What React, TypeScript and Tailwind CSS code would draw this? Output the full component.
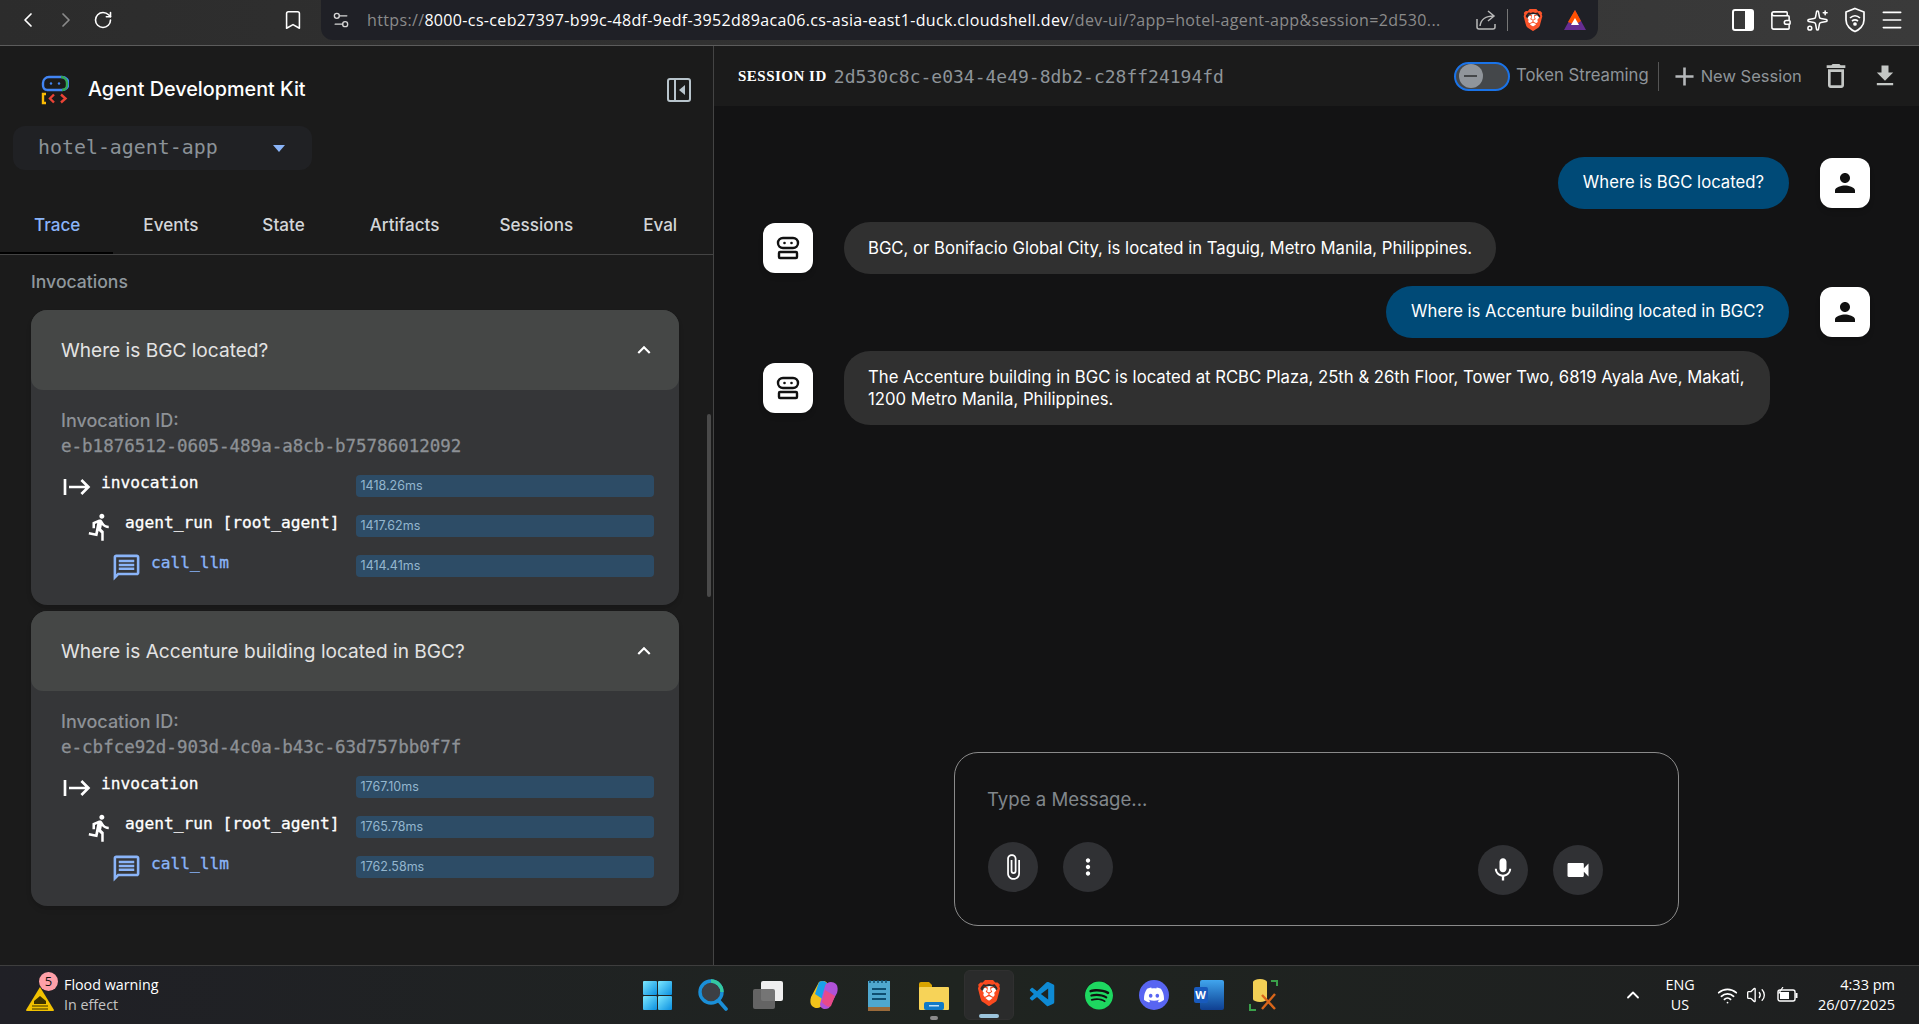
import React from "react";
import {
  Bookmark,
  ChevronLeft,
  ChevronRight,
  ChevronUp,
  Menu,
  RotateCw,
  Settings2,
  Sparkles,
  Volume2,
  Wallet,
  Wifi,
} from "lucide-react";
import {
  MdAdd,
  MdAttachFile,
  MdDeleteOutline,
  MdDirectionsRun,
  MdFileDownload,
  MdKeyboardArrowUp,
  MdMic,
  MdMoreVert,
  MdOutlineMessage,
  MdPerson,
  MdStart,
  MdVideocam,
} from "react-icons/md";
import { SiBrave, SiDiscord, SiSpotify } from "react-icons/si";
import { VscVscode } from "react-icons/vsc";

const mono = "font-['DejaVu_Sans_Mono',monospace]";

const invocations = [
  {
    title: "Where is BGC located?",
    id: "e-b1876512-0605-489a-a8cb-b75786012092",
    times: ["1418.26ms", "1417.62ms", "1414.41ms"],
  },
  {
    title: "Where is Accenture building located in BGC?",
    id: "e-cbfce92d-903d-4c0a-b43c-63d757bb0f7f",
    times: ["1767.10ms", "1765.78ms", "1762.58ms"],
  },
];

function AdkLogo() {
  return (
    <svg width="28" height="30" viewBox="0 0 28 30" fill="none">
      <path d="M6 15 H21 A5.5 5.5 0 0 0 21 2 H8 A6 6 0 0 0 2 8 V10 A5 5 0 0 0 6 15" stroke="#4285f4" strokeWidth="2.4" />
      <path d="M20 2 A6 6 0 0 1 26 8 V10 A5 5 0 0 1 21 15" stroke="#34a853" strokeWidth="2.4" />
      <circle cx="10" cy="8.5" r="1.2" fill="#4285f4" />
      <circle cx="18" cy="8.5" r="1.2" fill="#4285f4" />
      <path d="M5 19 H2 V28 H5" stroke="#fbbc04" strokeWidth="2.4" />
      <path d="M13 19.5 L9 23.5 L13 27.5" stroke="#ea4335" strokeWidth="2.4" />
      <path d="M20 19.5 L24.5 23.5 L20 27.5" stroke="#ea4335" strokeWidth="2.4" />
    </svg>
  );
}

function BotIcon() {
  return (
    <svg width="26" height="26" viewBox="0 0 26 26" fill="none" stroke="#111" strokeWidth="2.4">
      <rect x="3" y="3" width="20" height="10" rx="5" />
      <rect x="4" y="17" width="18" height="6" rx="1" />
      <circle cx="9.5" cy="8" r="1.3" fill="#111" stroke="none" />
      <circle cx="16.5" cy="8" r="1.3" fill="#111" stroke="none" />
    </svg>
  );
}

function BrowserBar() {
  return (
    <header className="flex h-[46px] shrink-0 items-start border-b border-[#5c5c5c] bg-gradient-to-r from-[#2c2c2c] to-[#3a3a3a] text-white">
      <div className="flex h-[40px] w-[321px] items-center pl-[16px]">
        <ChevronLeft size={24} strokeWidth={1.7} />
        <ChevronRight size={24} strokeWidth={1.7} className="ml-[14px] text-[#8a8a8a]" />
        <RotateCw size={20} strokeWidth={1.9} className="ml-[15px]" />
        <Bookmark size={22} strokeWidth={1.7} className="ml-[169px]" />
      </div>
      <div className="flex h-[40px] w-[1277px] items-center rounded-b-[12px] bg-[#1f2026] pl-[10px]">
        <Settings2 size={20} strokeWidth={1.6} className="text-[#d6d6d6]" />
        <div className="ml-[16px] w-[1088px] whitespace-nowrap font-['Open_Sans',sans-serif] text-[16px] tracking-[0.35px] text-[#8b8b8b]">
          https://
          <span className="text-white">8000-cs-ceb27397-b99c-48df-9edf-3952d89aca06.cs-asia-east1-duck.cloudshell.dev</span>
          /dev-ui/?app=hotel-agent-app&amp;session=2d530...
        </div>
        <svg width="22" height="22" viewBox="0 0 22 22" fill="none" stroke="#b9b9b9" strokeWidth="1.5" className="ml-[20px]">
          <path d="M13 2 L19 7 L13 12 M19 7 C10 7 6 10 5 17" />
          <path d="M2 10 V18 A2 2 0 0 0 4 20 H18 A2 2 0 0 0 20 18 V15" />
        </svg>
        <div className="ml-[10px] h-[22px] w-px bg-[#777]" />
        <span className="relative ml-[14px] flex h-[24px] w-[22px] items-center justify-center">
          <span className="absolute h-[13px] w-[13px] rounded-full bg-white" />
          <SiBrave size={24} className="relative text-[#fb542b]" />
        </span>
        <svg width="24" height="22" viewBox="0 0 24 22" className="ml-[19px]">
          <path d="M12 1 L23 21 H1 Z" fill="#662d91" />
          <path d="M12 1 L18 12 L12 16 L5 13 Z" fill="#ff5000" />
          <path d="M12 9 L16 16 H8 Z" fill="#fff" />
        </svg>
      </div>
      <div className="flex h-[40px] flex-1 items-center pl-[134px]">
        <svg width="22" height="22" viewBox="0 0 22 22" className="shrink-0">
          <rect x="1" y="1" width="20" height="20" rx="2" fill="none" stroke="#fff" strokeWidth="2" />
          <rect x="13" y="1" width="8" height="20" fill="#fff" />
        </svg>
        <Wallet size={23} strokeWidth={1.6} className="ml-[15px] shrink-0" />
        <Sparkles size={23} strokeWidth={1.6} className="ml-[14px] shrink-0" />
        <svg width="22" height="26" viewBox="0 0 22 26" fill="none" stroke="#fff" strokeWidth="1.7" className="ml-[15px] shrink-0">
          <path d="M11 1.5 L20 5 V13 C20 19 15 23 11 24.5 C7 23 2 19 2 13 V5 Z" />
          <path d="M6 11 C9 8 13 8 16 11 M8 14 C10 12.5 12 12.5 14 14" />
          <circle cx="11" cy="17" r="1" fill="#fff" />
        </svg>
        <Menu size={26} strokeWidth={1.5} className="ml-[13px] shrink-0" />
      </div>
    </header>
  );
}

function TraceRow({ indent, icon, label, time, blue }: { indent: string; icon: React.ReactNode; label: string; time: string; blue?: boolean }) {
  return (
    <div className="flex h-[40px]">
      <div className={`flex w-[295px] items-start ${indent} ${blue ? "text-[#8ab4f8]" : "text-white"}`}>
        <span className="flex h-[24px] w-[40px] shrink-0 items-center">{icon}</span>
        <span className={`${mono} -mt-[4px] whitespace-nowrap text-[16.2px] leading-[24px] [-webkit-text-stroke:0.3px]`}>{label}</span>
      </div>
      <div className="flex h-[22px] w-[299px] items-center rounded-[4px] bg-[#2d4c66] pl-[5px] text-[12.5px] text-[#94b6ce]">
        {time}
      </div>
    </div>
  );
}

function InvocationCard({ title, id, times }: { title: string; id: string; times: string[] }) {
  return (
    <section className="overflow-hidden rounded-[16px] bg-[#353638] shadow-md">
      <div className="flex h-[80px] items-center justify-between rounded-b-[12px] bg-[#454746] pl-[30px] pr-[22px]">
        <span className="text-[19.1px] text-[#e3e3e3]">{title}</span>
        <MdKeyboardArrowUp size={26} className="text-white" />
      </div>
      <div className="pb-[10px] pl-[30px] pr-[25px] pt-[19px]">
        <p className="text-[18px] font-medium leading-[24px] text-[#8d9196]">Invocation ID:</p>
        <p className={`${mono} text-[17.5px] leading-[26px] text-[#8d9196] [-webkit-text-stroke:0.3px]`}>{id}</p>
        <div className="mt-[16px]">
          <TraceRow indent="" icon={<MdStart size={32} />} label="invocation" time={times[0]} />
          <TraceRow indent="pl-[24px]" icon={<MdDirectionsRun size={30} />} label="agent_run [root_agent]" time={times[1]} />
          <TraceRow indent="pl-[50px]" blue icon={<MdOutlineMessage size={31} />} label="call_llm" time={times[2]} />
        </div>
      </div>
    </section>
  );
}

function Sidebar() {
  const tabs = [
    { name: "Trace", cls: "px-[32px] text-[#8ab4f8]" },
    { name: "Events", cls: "pl-[31px] pr-[32px] text-[#d3d6d9]" },
    { name: "State", cls: "pl-[32px] pr-[32px] text-[#d3d6d9]" },
    { name: "Artifacts", cls: "pl-[33px] pr-[30px] text-[#d3d6d9]" },
    { name: "Sessions", cls: "pl-[30px] pr-[36px] text-[#d3d6d9]" },
    { name: "Eval", cls: "pl-[34px] text-[#d3d6d9]" },
  ];
  return (
    <aside className="relative flex w-[714px] shrink-0 flex-col border-r border-[#444] bg-[#1b1b1b]">
      <div className="flex h-[80px] items-center pl-[41px] pr-[22px] pt-[8px]">
        <AdkLogo />
        <span className="ml-[19px] text-[19.8px] font-medium text-white">Agent Development Kit</span>
        <svg width="24" height="24" viewBox="0 0 24 24" fill="none" className="ml-auto">
          <rect x="1" y="1" width="22" height="22" rx="2" stroke="#b8c4cc" strokeWidth="2" />
          <path d="M8 1 V23" stroke="#b8c4cc" strokeWidth="2" />
          <path d="M18 7 L12 12 L18 17 Z" fill="#b8c4cc" />
        </svg>
      </div>
      <div className={`ml-[13px] flex h-[44px] w-[299px] items-center rounded-[12px] bg-[#202124] pl-[25px] ${mono} text-[19.9px] text-[#8b9298]`}>
        hotel-agent-app
        <span className="ml-[55px] h-0 w-0 border-x-[6px] border-t-[7px] border-x-transparent border-t-[#8ab4f8]" />
      </div>
      <nav className="relative mt-[29px] flex h-[56px] items-center border-b border-[#444] pb-[4px] pl-[2px]">
        {tabs.map((t) => (
          <span key={t.name} className={`text-[17.1px] font-medium ${t.cls}`}>
            {t.name}
          </span>
        ))}
        <span className="absolute bottom-0 left-0 h-[2px] w-[113px] bg-black" />
      </nav>
      <div className="pl-[31px] pr-[34px] pt-[15px]">
        <h3 className="text-[17.6px] font-medium leading-[24px] text-[#8f979d]">Invocations</h3>
        <div className="mt-[16px] flex flex-col gap-[6px]">
          {invocations.map((inv) => (
            <InvocationCard key={inv.id} {...inv} />
          ))}
        </div>
      </div>
      <div className="absolute right-[2px] top-[368px] h-[183px] w-[4px] rounded-full bg-[#4a4a4a]" />
    </aside>
  );
}

function Avatar({ kind }: { kind: "user" | "bot" }) {
  return (
    <div className="flex h-[50px] w-[50px] shrink-0 items-center justify-center rounded-[12px] bg-white shadow-md">
      {kind === "user" ? <MdPerson size={30} className="text-[#111]" /> : <BotIcon />}
    </div>
  );
}

function UserMsg({ text }: { text: string }) {
  return (
    <div className="flex items-center justify-end gap-[31px]">
      <div className="flex h-[52px] items-center rounded-[26px] bg-[#004a77] px-[25px] text-[16.7px] text-white">{text}</div>
      <Avatar kind="user" />
    </div>
  );
}

function BotMsg({ children, w }: { children: React.ReactNode; w: string }) {
  return (
    <div className="flex items-center gap-[31px]">
      <Avatar kind="bot" />
      <div className={`rounded-[26px] bg-[#303030] px-[24px] py-[15px] text-[16.7px] leading-[22px] text-white ${w}`}>{children}</div>
    </div>
  );
}

function RoundBtn({ children }: { children: React.ReactNode }) {
  return <button className="flex h-[50px] w-[50px] items-center justify-center rounded-full bg-[#303134] text-white">{children}</button>;
}

function Chat() {
  return (
    <main className="flex min-w-0 flex-1 flex-col bg-[#131314]">
      <div className="flex h-[60px] shrink-0 items-center bg-[#1b1b1b] pl-[24px] text-[#8e9499]">
        <span className="font-['Liberation_Serif',serif] text-[15px] font-bold tracking-[0.5px] text-white">SESSION ID</span>
        <span className={`${mono} ml-[7px] text-[18px]`}>2d530c8c-e034-4e49-8db2-c28ff24194fd</span>
        <div className="ml-[230px] flex h-[29px] w-[56px] items-center rounded-full border-2 border-[#1a73e8] bg-[#44474a] pl-[3px]">
          <span className="flex h-[24px] w-[24px] items-center justify-center rounded-full bg-[#90959b]">
            <span className="h-[2px] w-[13px] bg-[#44474a]" />
          </span>
        </div>
        <span className="ml-[6px] text-[16.7px]">Token Streaming</span>
        <span className="ml-[9px] h-[29px] w-px bg-[#555]" />
        <MdAdd size={31} className="ml-[10px] text-[#b5b8ba]" />
        <span className="ml-[1px] text-[16.5px]">New Session</span>
        <MdDeleteOutline size={32} className="ml-[18px] text-[#c4c7c5]" />
        <MdFileDownload size={28} className="ml-[19px] text-[#c4c7c5]" />
      </div>
      <div className="flex flex-col pl-[49px] pr-[49px] pt-[51px]">
        <UserMsg text="Where is BGC located?" />
        <div className="mt-[13px]">
          <BotMsg w="">BGC, or Bonifacio Global City, is located in Taguig, Metro Manila, Philippines.</BotMsg>
        </div>
        <div className="mt-[12px]">
          <UserMsg text="Where is Accenture building located in BGC?" />
        </div>
        <div className="mt-[13px]">
          <BotMsg w="w-[926px]">
            The Accenture building in BGC is located at RCBC Plaza, 25th &amp; 26th Floor, Tower Two, 6819 Ayala Ave, Makati, 1200 Metro Manila, Philippines.
          </BotMsg>
        </div>
      </div>
      <div className="mb-[39px] ml-[240px] mt-auto h-[174px] w-[725px] rounded-[24px] border border-[#8a8a8a] px-[33px] pt-[34px]">
        <p className="-ml-[1px] text-[18.6px] leading-[24px] text-[#80868b]">Type a Message...</p>
        <div className="mt-[31px] flex items-start">
          <RoundBtn>
            <MdAttachFile size={28} />
          </RoundBtn>
          <div className="ml-[25px]">
            <RoundBtn>
              <MdMoreVert size={26} />
            </RoundBtn>
          </div>
          <div className="ml-[365px] mt-[3px]">
            <RoundBtn>
              <MdMic size={28} />
            </RoundBtn>
          </div>
          <div className="ml-[25px] mt-[3px]">
            <RoundBtn>
              <MdVideocam size={28} />
            </RoundBtn>
          </div>
        </div>
      </div>
    </main>
  );
}

function WinLogo() {
  return (
    <svg width="29" height="29" viewBox="0 0 29 29">
      <defs>
        <linearGradient id="win" x1="0" y1="0" x2="1" y2="1">
          <stop offset="0" stopColor="#7ce8ff" />
          <stop offset="1" stopColor="#0a8fe0" />
        </linearGradient>
      </defs>
      <rect width="14" height="14" rx="1" fill="url(#win)" />
      <rect x="15" width="14" height="14" rx="1" fill="url(#win)" />
      <rect y="15" width="14" height="14" rx="1" fill="url(#win)" />
      <rect x="15" y="15" width="14" height="14" rx="1" fill="url(#win)" />
    </svg>
  );
}

function TaskIcons() {
  return (
    <div className="flex items-center">
      <div className="flex w-[56px] justify-center"><WinLogo /></div>
      <div className="flex w-[55px] justify-center">
        <svg width="30" height="32" viewBox="0 0 30 32" fill="none">
          <circle cx="13" cy="13" r="11" fill="#3c3f44" stroke="#1a8fd8" strokeWidth="3.4" />
          <path d="M13 2 A11 11 0 0 1 24 13" stroke="#35c9a0" strokeWidth="3.4" />
          <path d="M21 22 L28 30" stroke="#1a8fd8" strokeWidth="3.6" strokeLinecap="round" />
        </svg>
      </div>
      <div className="flex w-[56px] justify-center">
        <svg width="30" height="28" viewBox="0 0 30 28">
          <rect x="8" y="0" width="22" height="20" rx="2" fill="#efefef" />
          <rect x="0" y="8" width="22" height="20" rx="2" fill="#6a6a6a" opacity="0.92" />
        </svg>
      </div>
      <div className="flex w-[55px] justify-center">
        <svg width="28" height="30" viewBox="0 0 28 30">
          <path d="M9 2 C13 0 18 1 18 6 L13 24 C11 29 5 29 2 26 C0 24 0 20 1 17 Z" fill="#f2c21a" />
          <path d="M9 2 C13 0 17 1 18 6 L14 20 L5 14 Z" fill="#1aa0e8" />
          <path d="M19 28 C15 30 10 29 10 24 L15 6 C17 1 23 1 26 4 C28 6 28 10 27 13 Z" fill="#b052d8" />
          <path d="M15 10 L25 16 L21 26 C20 28 15 26 12 22 Z" fill="#e84a8a" />
        </svg>
      </div>
      <div className="flex w-[55px] justify-center">
        <svg width="22" height="31" viewBox="0 0 22 31">
          <rect y="1" width="22" height="28" fill="#4fa8cf" />
          <rect y="27" width="22" height="4" fill="#9a6a3a" />
          <path d="M4 9 H18 M4 14 H18 M4 19 H18" stroke="#0f4e70" strokeWidth="2" />
          <path d="M2 0 V3 M6 0 V3 M10 0 V3 M14 0 V3 M18 0 V3" stroke="#0f4e70" strokeWidth="1.5" />
        </svg>
      </div>
      <div className="flex h-[50px] w-[55px] flex-col items-center justify-end">
        <svg width="30" height="28" viewBox="0 0 30 28">
          <path d="M0 2 A2 2 0 0 1 2 0 H10 L13 3 V8 H0 Z" fill="#d9a400" />
          <rect y="5" width="30" height="23" rx="1" fill="#f7d358" />
          <rect x="5" y="20" width="20" height="8" rx="2" fill="#0f7ac8" />
          <rect x="10" y="23" width="10" height="1.5" fill="#bde0f7" />
        </svg>
        <span className="mt-[6px] h-[4px] w-[8px] rounded-full bg-[#8b8b8b]" />
      </div>
      <div className="ml-[3px] flex h-[50px] w-[50px] flex-col items-center justify-end rounded-[6px] border border-[#303030] bg-[#2a2b2b] pb-[1px]">
        <span className="relative flex h-[30px] w-[26px] items-center justify-center">
          <span className="absolute h-[15px] w-[15px] rounded-full bg-white" />
          <SiBrave size={30} className="relative text-[#fb4a1f]" />
        </span>
        <span className="mt-[6px] h-[4px] w-[20px] rounded-full bg-[#9cc4dc]" />
      </div>
      <div className="flex w-[57px] justify-center"><VscVscode size={30} className="text-[#0e8ad4]" /></div>
      <div className="flex w-[55px] justify-center">
        <span className="flex h-[28px] w-[28px] items-center justify-center rounded-full bg-[#111]">
          <SiSpotify size={29} className="text-[#1ed760]" />
        </span>
      </div>
      <div className="flex w-[55px] justify-center">
        <span className="flex h-[30px] w-[30px] items-center justify-center rounded-full bg-[#5865f2]">
          <SiDiscord size={20} className="text-white" />
        </span>
      </div>
      <div className="flex w-[55px] justify-center">
        <div className="relative h-[30px] w-[30px]">
          <div className="ml-[6px] h-[30px] w-[24px] rounded-[2px] bg-gradient-to-b from-[#41a5ee] to-[#103f91]" />
          <span className="absolute left-0 top-[7px] flex h-[16px] w-[14px] items-center justify-center rounded-[2px] bg-[#185abd] text-[11px] font-bold text-white">W</span>
        </div>
      </div>
      <div className="flex w-[56px] justify-center">
        <svg width="30" height="32" viewBox="0 0 30 32" fill="none">
          <path d="M4 3 A7 3 0 0 1 18 3 V20 A7 3 0 0 1 4 20 Z" fill="#f2cf55" />
          <path d="M22 2 H28 V7 M1 25 V31 H7" stroke="#3aa04a" strokeWidth="2" />
          <path d="M13 16 L26 30 M26 15 L13 30" stroke="#d9661a" strokeWidth="2.4" />
        </svg>
      </div>
    </div>
  );
}

function Taskbar() {
  return (
    <footer className="flex h-[59px] shrink-0 items-center border-t border-[#3e3e3e] bg-gradient-to-r from-[#202026] via-[#1f2420] to-[#1e1f20] font-['Open_Sans',sans-serif] text-white">
      <div className="flex w-[175px] shrink-0 items-center pl-[25px]">
        <div className="relative h-[30px] w-[30px] shrink-0">
          <svg width="30" height="26" viewBox="0 0 30 26" className="absolute bottom-[-2px] left-0">
            <path d="M15 1 L29 24 A1 1 0 0 1 28 25 H2 A1 1 0 0 1 1 24 Z" fill="#f2c200" />
            <path d="M9 15 L15 10 L21 15 V18 H9 Z" fill="#3a3000" />
            <path d="M7 20 H23 M7 23 H23" stroke="#3a3000" strokeWidth="1" />
          </svg>
          <span className="absolute -top-[8px] left-[14px] flex h-[19px] w-[19px] items-center justify-center rounded-full bg-[#ffa0a8] text-[13px] text-[#111]">5</span>
        </div>
        <div className="ml-[9px] whitespace-nowrap text-[14.3px] leading-[20px]">
          <p>Flood warning</p>
          <p className="text-[#c4c4c4]">In effect</p>
        </div>
      </div>
      <div className="flex w-[1448px] shrink-0 pl-[454px]">
        <TaskIcons />
      </div>
      <ChevronUp size={20} strokeWidth={2.2} className="shrink-0" />
      <div className="ml-[19px] w-[36px] shrink-0 text-center text-[14.3px] leading-[20px]">
        <p>ENG</p>
        <p>US</p>
      </div>
      <Wifi size={21} className="ml-[19px] shrink-0" />
      <Volume2 size={20} strokeWidth={1.6} className="ml-[8px] shrink-0" />
      <svg width="21" height="16" viewBox="0 0 21 16" fill="none" className="ml-[11px] shrink-0">
        <rect x="1" y="3" width="17" height="11" rx="2" stroke="#fff" strokeWidth="1.4" />
        <rect x="3" y="5" width="9" height="7" fill="#fff" />
        <rect x="18.5" y="6" width="2" height="5" fill="#fff" />
        <path d="M6 0 L2 6 H6 L4 10" stroke="#fff" strokeWidth="1.2" />
      </svg>
      <div className="ml-auto whitespace-nowrap pr-[24px] text-right text-[14.5px] leading-[20px]">
        <p>4:33 pm</p>
        <p>26/07/2025</p>
      </div>
    </footer>
  );
}

export default function App() {
  return (
    <div className="flex h-[1024px] w-[1919px] flex-col overflow-hidden bg-[#131314] font-['Inter',sans-serif]">
      <BrowserBar />
      <div className="flex min-h-0 flex-1">
        <Sidebar />
        <Chat />
      </div>
      <Taskbar />
    </div>
  );
}
